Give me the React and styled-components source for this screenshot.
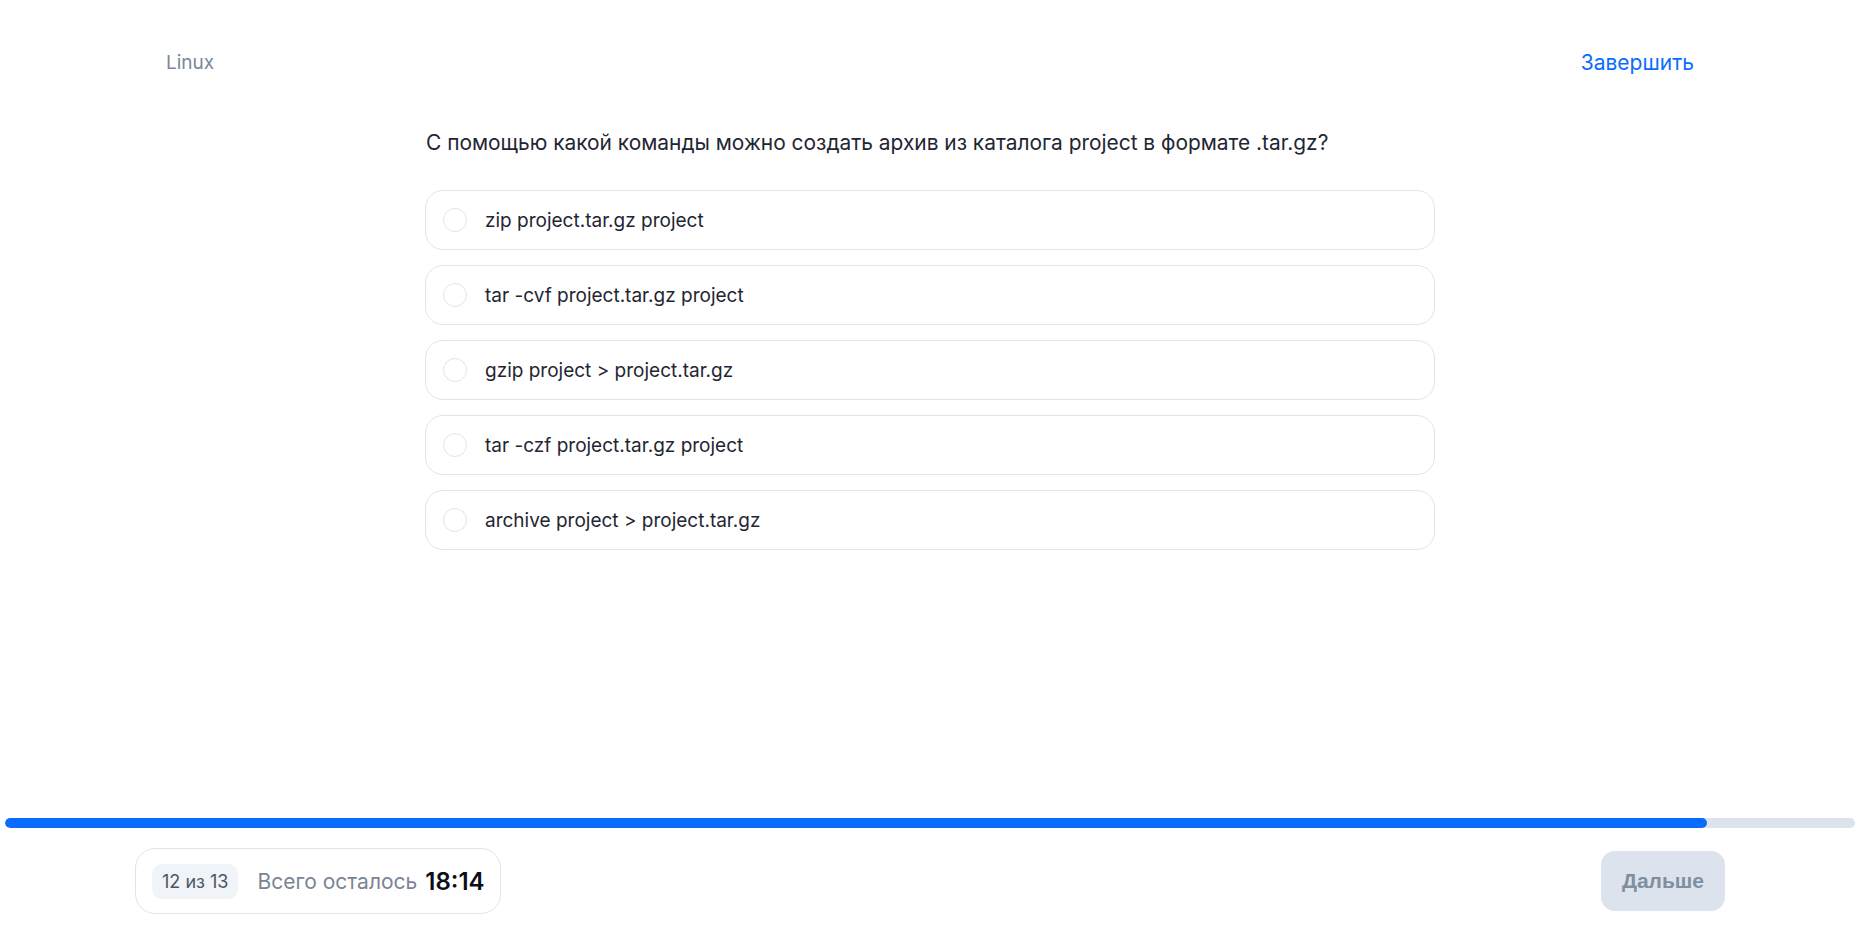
import React from "react";
import styled, { createGlobalStyle } from "styled-components";

const GlobalStyle = createGlobalStyle`
    html, body {
        margin: 0;
        padding: 0;
        background: #ffffff;
    }
    body {
        font-family: Inter, "Noto Sans", sans-serif;
        color: #1f2633;
    }
`;

const Page = styled.div`
    display: flex;
    flex-direction: column;
    min-height: 100vh;
`;

const Header = styled.header`
    display: flex;
    justify-content: space-between;
    align-items: center;
    padding: 48px 166px 0;
    height: 28px;
`;

const Subject = styled.span`
    font-size: 19px;
    color: #7a8799;
`;

const Finish = styled.button`
    background: none;
    border: none;
    padding: 0;
    font-family: inherit;
    font-size: 21px;
    color: #0a6cff;
    cursor: pointer;
`;

const Main = styled.main`
    flex: 1;
    display: flex;
    justify-content: center;
    padding-top: 53px;
`;

const Question = styled.section`
    width: 1010px;
    display: flex;
    flex-direction: column;
`;

const Title = styled.h1`
    margin: 0 0 33px 1px;
    font-size: 20.9px;
    font-weight: 400;
    line-height: 28px;
    color: #1f2633;
`;

const Options = styled.ul`
    list-style: none;
    margin: 0;
    padding: 0;
    display: flex;
    flex-direction: column;
    gap: 15px;
`;

const Option = styled.li`
    display: flex;
    align-items: center;
    gap: 18px;
    height: 58px;
    padding: 0 17px;
    border: 1px solid #dfe4ec;
    border-radius: 18px;
    font-size: 19px;
    color: #1f2633;
    cursor: pointer;
`;

const Radio = styled.span`
    width: 22px;
    height: 22px;
    flex-shrink: 0;
    border: 1px solid #dfe4ec;
    border-radius: 50%;
`;

const Footer = styled.footer`
    display: flex;
    flex-direction: column;
    gap: 20px;
    padding: 0 5px 21px;
`;

const Track = styled.div`
    height: 10px;
    border-radius: 5px;
    background: #dde3ec;
    overflow: hidden;
`;

const Fill = styled.div`
    height: 100%;
    border-radius: 5px;
    background: #0a6cff;
`;

const Bar = styled.div`
    display: flex;
    justify-content: space-between;
    align-items: center;
    padding: 0 130px;
`;

const Status = styled.div`
    display: flex;
    align-items: center;
    height: 64px;
    padding: 0 15px 0 16px;
    border: 1px solid #dfe4ec;
    border-radius: 20px;
`;

const Counter = styled.span`
    display: flex;
    align-items: center;
    height: 35px;
    padding: 0 10px;
    border-radius: 10px;
    background: #f0f3f8;
    font-size: 18px;
    color: #4b5565;
`;

const Left = styled.span`
    margin-left: 19px;
    font-size: 21px;
    color: #7a8494;
`;

const Time = styled.span`
    margin-left: 8px;
    font-size: 24px;
    font-weight: 600;
    color: #0b0f17;
`;

const Next = styled.button`
    height: 60px;
    padding: 0 21px;
    border: none;
    border-radius: 14px;
    background: #dce3ec;
    font-family: "Liberation Sans", Arial, sans-serif;
    font-size: 21px;
    font-weight: 700;
    color: #7f8fa2;
`;

const answers = [
    "zip project.tar.gz project",
    "tar -cvf project.tar.gz project",
    "gzip project > project.tar.gz",
    "tar -czf project.tar.gz project",
    "archive project > project.tar.gz",
];

export default function App() {
    const current = 12;
    const total = 13;

    return <Page>
        <GlobalStyle />
        <Header>
            <Subject>Linux</Subject>
            <Finish>Завершить</Finish>
        </Header>
        <Main>
            <Question>
                <Title>С помощью какой команды можно создать архив из каталога project в формате .tar.gz?</Title>
                <Options>
                    {answers.map(a => <Option key={a}>
                        <Radio />
                        <span>{a}</span>
                    </Option>)}
                </Options>
            </Question>
        </Main>
        <Footer>
            <Track>
                <Fill style={{ width: `${Math.floor((current / total) * 100)}%` }} />
            </Track>
            <Bar>
                <Status>
                    <Counter>{current} из {total}</Counter>
                    <Left>Всего осталось</Left>
                    <Time>18:14</Time>
                </Status>
                <Next disabled>Дальше</Next>
            </Bar>
        </Footer>
    </Page>;
}
